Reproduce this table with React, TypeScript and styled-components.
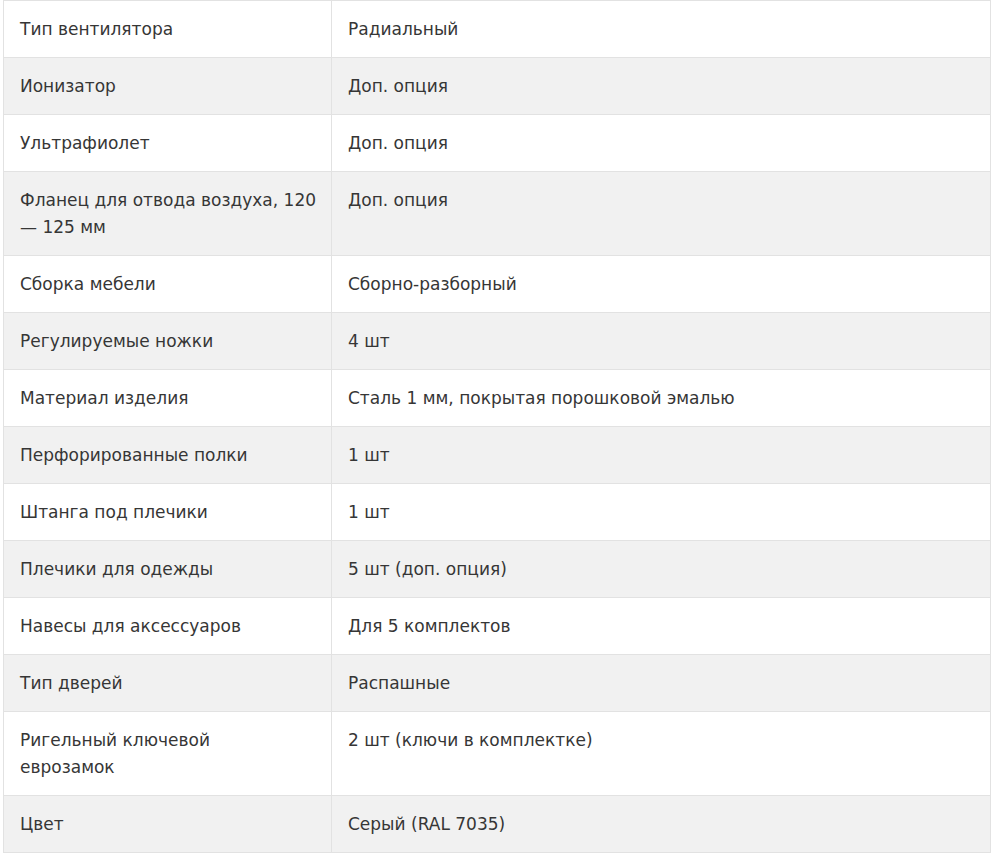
import styled, { createGlobalStyle } from 'styled-components'

const GlobalStyle = createGlobalStyle`
	html, body {
		margin: 0;
		padding: 0;
		background: #ffffff;
	}
`

const Page = styled.div`
	padding: 0 1px 0 3px;
`

const Table = styled.table`
	width: 988px;
	border-collapse: collapse;
	table-layout: fixed;
	font-family: 'DejaVu Sans', 'Open Sans', sans-serif;
	font-size: 17px;
	line-height: 27px;
	color: #363636;
`

const Row = styled.tr<{ $striped: boolean }>`
	background: ${({ $striped }) => ($striped ? '#f1f1f1' : '#ffffff')};
`

const Cell = styled.td<{ $name?: boolean }>`
	border: 1px solid #e2e2e2;
	padding: 15px 16px 14px;
	vertical-align: top;
	white-space: pre;
	width: ${({ $name }) => ($name ? '295px' : 'auto')};
`

// line breaks kept as in the original layout
const specs: [string, string][] = [
	['Тип вентилятора', 'Радиальный'],
	['Ионизатор', 'Доп. опция'],
	['Ультрафиолет', 'Доп. опция'],
	['Фланец для отвода воздуха, 120\n— 125 мм', 'Доп. опция'],
	['Сборка мебели', 'Сборно-разборный'],
	['Регулируемые ножки', '4 шт'],
	['Материал изделия', 'Сталь 1 мм, покрытая порошковой эмалью'],
	['Перфорированные полки', '1 шт'],
	['Штанга под плечики', '1 шт'],
	['Плечики для одежды', '5 шт (доп. опция)'],
	['Навесы для аксессуаров', 'Для 5 комплектов'],
	['Тип дверей', 'Распашные'],
	['Ригельный ключевой\nеврозамок', '2 шт (ключи в комплектке)'],
	['Цвет', 'Серый (RAL 7035)'],
]

export default function App() {
	return (
		<>
			<GlobalStyle />
			<Page>
				<Table>
					<tbody>
						{specs.map(([name, value], i) => (
							<Row key={name} $striped={i % 2 === 1}>
								<Cell $name>{name}</Cell>
								<Cell>{value}</Cell>
							</Row>
						))}
					</tbody>
				</Table>
			</Page>
		</>
	)
}
